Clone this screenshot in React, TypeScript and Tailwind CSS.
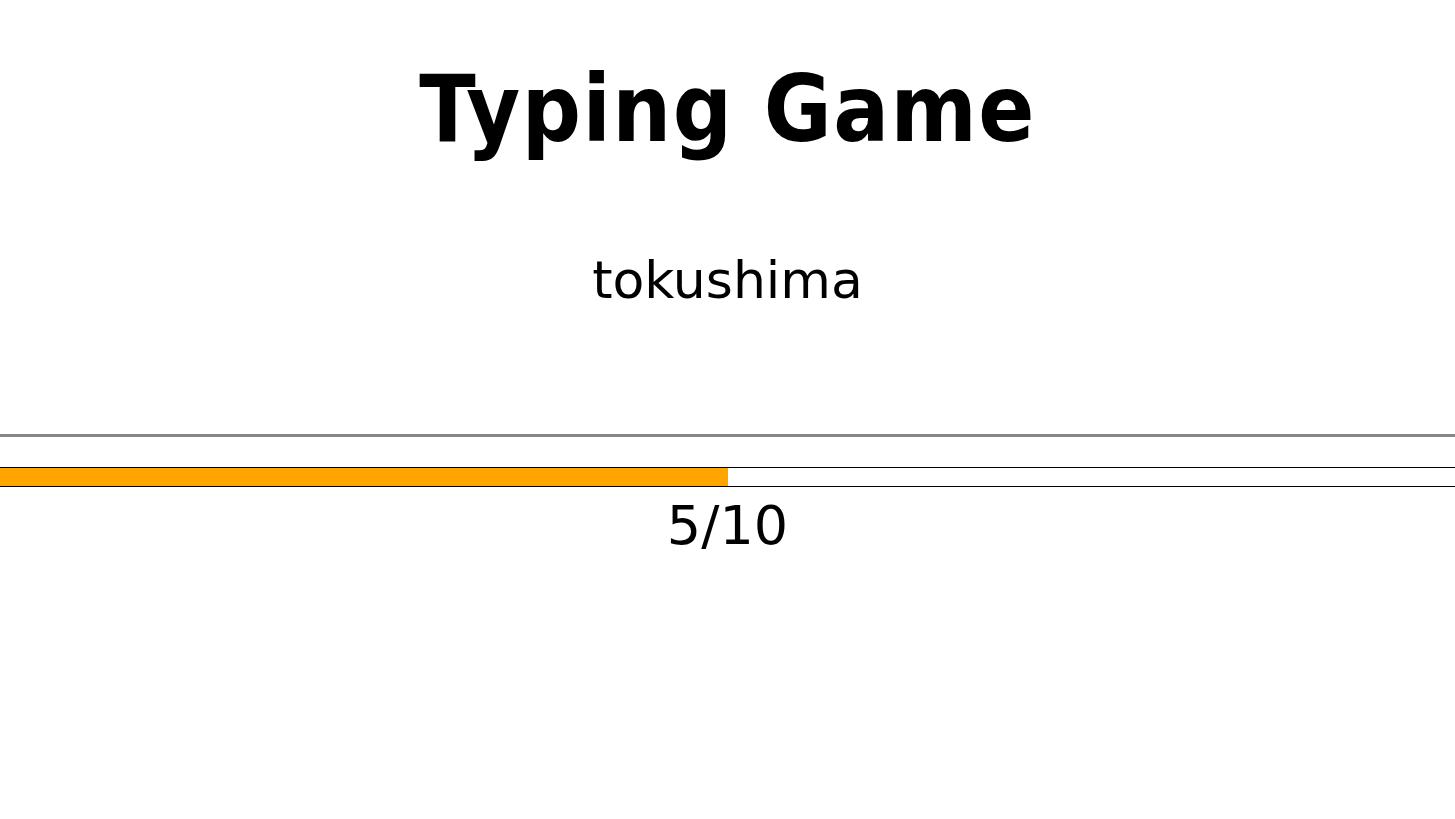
import React from "react";

export default function App() {
  const done = 5;
  const total = 10;
  const pct = (done / total) * 100;
  return (
    <div className="min-h-[819px] w-full bg-white text-black font-['DejaVu_Sans',sans-serif]">
      <div className="flex flex-col">
        <h1 className="mt-[64px] text-center text-[92px] leading-[92px] font-bold tracking-[1.5px] font-['DejaVu_Sans_Condensed','DejaVu_Sans',sans-serif]">
          Typing Game
        </h1>
        <p className="mt-[98px] text-center text-[52px] leading-[52px]">tokushima</p>
        <div className="mt-[128px] h-[3px] w-full bg-[#888888]" />
        <div className="mt-[30px] h-[20px] w-full border-y border-black bg-white">
          <div className="h-full bg-[#ffa500]" style={{ width: `${pct}%` }} />
        </div>
        <p className="mt-[12px] text-center text-[54px] leading-[54px]">
          {done}/{total}
        </p>
      </div>
    </div>
  );
}
